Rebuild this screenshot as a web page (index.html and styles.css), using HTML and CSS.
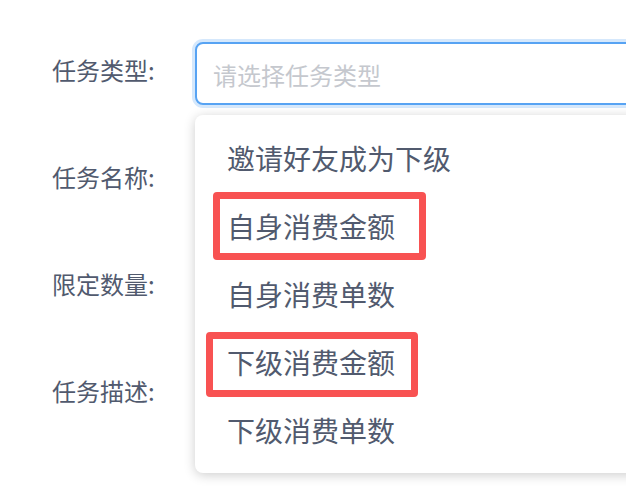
FILE: index.html
```html
<!DOCTYPE html>
<html lang="zh-CN">
<head>
<meta charset="utf-8">
<title>任务</title>
<link rel="stylesheet" href="styles.css">
</head>
<body>
<div class="page">
  <form class="form">
    <div class="row">
      <label class="label">任务类型:</label>
      <div class="field">
        <div class="input focused"><span class="placeholder">请选择任务类型</span></div>
      </div>
    </div>
    <div class="row">
      <label class="label">任务名称:</label>
      <div class="field"><div class="input"></div></div>
    </div>
    <div class="row">
      <label class="label">限定数量:</label>
      <div class="field"><div class="input"></div></div>
    </div>
    <div class="row">
      <label class="label">任务描述:</label>
      <div class="field"><div class="input"></div></div>
    </div>
  </form>
  <ul class="dropdown">
    <li class="item">邀请好友成为下级</li>
    <li class="item">自身消费金额</li>
    <li class="item">自身消费单数</li>
    <li class="item">下级消费金额</li>
    <li class="item">下级消费单数</li>
    <li class="mark mark-one"></li>
    <li class="mark mark-two"></li>
  </ul>
</div>
</body>
</html>
```

FILE: styles.css
```css
html, body {
  margin: 0;
  padding: 0;
  background: #ffffff;
}
body {
  font-family: "Noto Sans CJK SC", "Noto Sans", sans-serif;
  color: #515a6e;
  overflow: hidden;
  width: 626px;
  height: 494px;
}
.page {
  position: relative;
  width: 626px;
  height: 494px;
  overflow: hidden;
}
.form {
  display: flex;
  flex-direction: column;
  gap: 44px;
  padding: 42px 0 0 52px;
  margin: 0;
}
.row {
  display: flex;
  align-items: flex-start;
  height: 63px;
}
.label {
  width: 143px;
  flex: none;
  font-size: 24px;
  line-height: 56px;
  color: #515a6e;
}
.field {
  flex: none;
  width: 600px;
}
.input {
  box-sizing: border-box;
  height: 63px;
  border: 2px solid #dcdee2;
  border-radius: 8px;
  padding: 0 16px;
  display: flex;
  align-items: center;
  background: #fff;
}
.input.focused {
  border-color: #57a3f3;
  box-shadow: 0 0 0 3px rgba(45, 140, 240, 0.2);
}
.placeholder {
  font-size: 24px;
  color: #c5c8ce;
  line-height: 1;
  padding-top: 2px;
}
.dropdown {
  position: absolute;
  left: 195px;
  top: 115px;
  width: 600px;
  margin: 0;
  padding: 9px 0;
  list-style: none;
  background: #fff;
  border-radius: 8px;
  box-shadow: 0 2px 12px rgba(0, 0, 0, 0.2);
}
.item {
  height: 68px;
  line-height: 68px;
  padding: 0 32px;
  font-size: 28px;
  color: #515a6e;
}
.mark {
  position: absolute;
  box-sizing: border-box;
  border: 7px solid #f85252;
  border-radius: 4px;
}
.mark-one {
  left: 18px;
  top: 77px;
  width: 213px;
  height: 68px;
}
.mark-two {
  left: 11px;
  top: 217px;
  width: 212px;
  height: 65px;
}
```
